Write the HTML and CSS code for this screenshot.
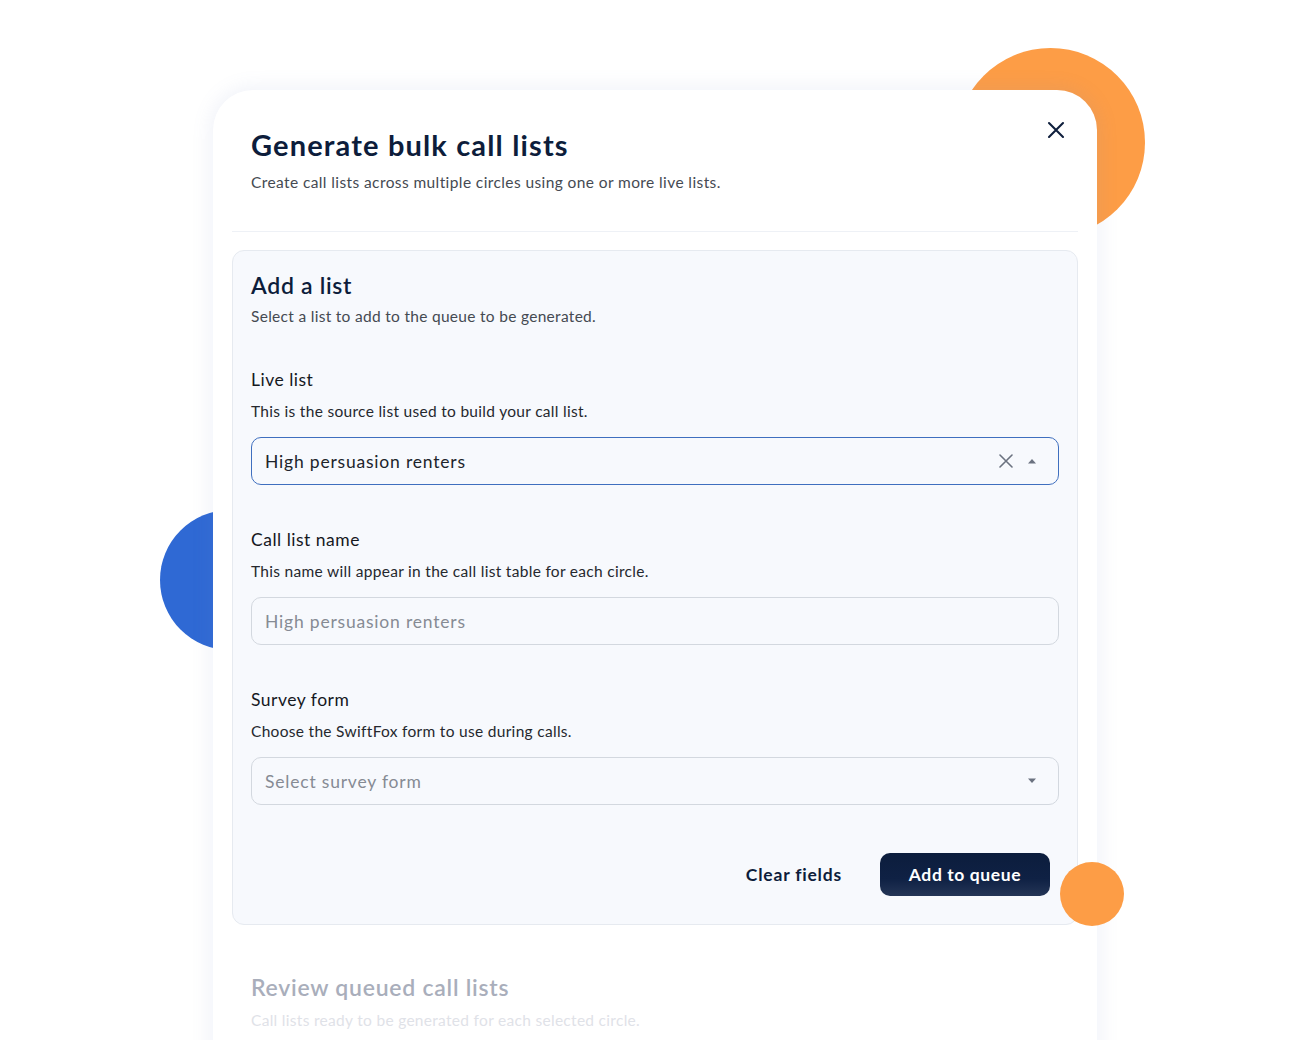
FILE: index.html
```html
<!DOCTYPE html>
<html lang="en">
<head>
<meta charset="utf-8">
<title>Generate bulk call lists</title>
<link rel="stylesheet" href="styles.css">
</head>
<body>
<div class="stage">
  <div class="deco deco-orange-big"></div>
  <div class="deco deco-blue"></div>
  <div class="deco deco-orange-small"></div>

  <section class="card">
    <header class="card-header">
      <h1 class="title">Generate bulk call lists</h1>
      <p class="subtitle">Create call lists across multiple circles using one or more live lists.</p>
      <button class="close" aria-label="Close">
        <svg width="18" height="18" viewBox="0 0 18 18"><path d="M2 2L16 16M16 2L2 16" stroke="#0f1f3d" stroke-width="2.1" stroke-linecap="round"/></svg>
      </button>
    </header>
    <div class="divider"></div>

    <div class="panel">
      <h2 class="panel-title">Add a list</h2>
      <p class="panel-sub">Select a list to add to the queue to be generated.</p>

      <div class="field">
        <div class="label">Live list</div>
        <div class="help">This is the source list used to build your call list.</div>
        <div class="input input-focus">
          <span class="value">High persuasion renters</span>
          <span class="icons">
            <svg width="14" height="14" viewBox="0 0 14 14"><path d="M1 1L13 13M13 1L1 13" stroke="#6b7280" stroke-width="1.6" stroke-linecap="round"/></svg>
            <svg width="10" height="6" viewBox="0 0 10 6"><path d="M1 5.5L5 1L9 5.5Z" fill="#6b7280"/></svg>
          </span>
        </div>
      </div>

      <div class="field">
        <div class="label">Call list name</div>
        <div class="help">This name will appear in the call list table for each circle.</div>
        <div class="input">
          <span class="placeholder">High persuasion renters</span>
        </div>
      </div>

      <div class="field">
        <div class="label">Survey form</div>
        <div class="help">Choose the SwiftFox form to use during calls.</div>
        <div class="input">
          <span class="placeholder">Select survey form</span>
          <span class="icons">
            <svg width="10" height="6" viewBox="0 0 10 6"><path d="M1 0.5L5 5L9 0.5Z" fill="#6b7280"/></svg>
          </span>
        </div>
      </div>

      <div class="actions">
        <button class="btn-text">Clear fields</button>
        <button class="btn-primary">Add to queue</button>
      </div>
    </div>

    <div class="review">
      <h2 class="review-title">Review queued call lists</h2>
      <p class="review-sub">Call lists ready to be generated for each selected circle.</p>
    </div>
  </section>
</div>
</body>
</html>
```

FILE: styles.css
```css
* { box-sizing: border-box; }
html, body { margin: 0; padding: 0; background: #ffffff; }
body {
  font-family: "Lato", "Liberation Sans", sans-serif;
  color: #0f1f3d;
  overflow: hidden;
  height: 1040px;
}
.stage {
  position: relative;
  width: 1310px;
  height: 1040px;
  padding-top: 90px;
}
.deco { position: absolute; border-radius: 50%; }
.deco-orange-big {
  left: 956px; top: 48px; width: 189px; height: 189px;
  background: #fd9d46;
  z-index: 0;
}
.deco-blue {
  left: 160px; top: 510px; width: 140px; height: 140px;
  background: #2f69d4;
  z-index: 0;
}
.deco-orange-small {
  left: 1060px; top: 862px; width: 64px; height: 64px;
  background: #fd9d46;
  z-index: 3;
}
.card {
  position: relative;
  z-index: 1;
  margin-left: 213px;
  width: 884px;
  height: 1000px;
  background: #ffffff;
  border-radius: 40px 40px 0 0;
  box-shadow: 0 0 18px 4px rgba(120, 140, 200, 0.10);
  padding: 0 19px;
}
.card-header {
  position: relative;
  padding: 38px 19px 38px 19px;
}
.title {
  margin: 0;
  font-size: 29px;
  line-height: 34px;
  font-weight: 700;
  color: #0d1d3b;
  letter-spacing: 1.15px;
}
.subtitle {
  margin: 9px 0 0 0;
  font-size: 15.5px;
  line-height: 22px;
  color: #454a52;
  letter-spacing: 0.4px;
}
.close {
  position: absolute;
  right: 9px;
  top: 27px;
  width: 26px; height: 26px;
  border: 0; background: transparent; padding: 0;
  display: flex; align-items: center; justify-content: center;
}
.divider { height: 1px; background: #eef1f6; }
.panel {
  margin-top: 18px;
  background: #f7f9fd;
  border: 1px solid #e6eaf0;
  border-radius: 12px;
  padding: 20px 18px 28px 18px;
}
.panel-title {
  margin: 0;
  font-size: 23px;
  line-height: 28px;
  font-weight: 600;
  color: #0d1d3b;
  letter-spacing: 0.7px;
}
.panel-sub {
  margin: 6px 0 0 0;
  font-size: 15.5px;
  line-height: 22px;
  color: #454a52;
  letter-spacing: 0.3px;
}
.field { margin-top: 41px; }
.field + .field { margin-top: 43px; }
.label {
  font-size: 17.5px;
  line-height: 24px;
  color: #15181e;
  letter-spacing: 0.5px;
}
.help {
  margin-top: 8px;
  font-size: 15.5px;
  line-height: 22px;
  color: #25282e;
  letter-spacing: 0.3px;
}
.input {
  margin-top: 15px;
  height: 48px;
  border: 1px solid #d3d8df;
  border-radius: 10px;
  background: #f7f9fd;
  display: flex;
  align-items: center;
  justify-content: space-between;
  padding: 0 21px 0 13px;
  font-size: 17.5px;
  letter-spacing: 0.8px;
}
.input-focus { border: 1.5px solid #3f6fbf; }
.value { color: #20242b; }
.placeholder { color: #868b94; }
.icons { display: flex; align-items: center; gap: 14px; }
.actions {
  margin-top: 48px;
  display: flex;
  justify-content: flex-end;
  align-items: center;
  gap: 38px;
  padding-right: 9px;
}
.btn-text {
  border: 0; background: transparent; padding: 0;
  font-family: inherit;
  font-size: 17.5px;
  font-weight: 700;
  color: #0d1d3b;
  letter-spacing: 0.8px;
}
.btn-primary {
  border: 0;
  height: 43px;
  width: 170px;
  border-radius: 10px;
  background: linear-gradient(180deg, #0c1d3d 0%, #0f2144 60%, #243556 100%);
  color: #ffffff;
  font-family: inherit;
  font-size: 17.5px;
  font-weight: 700;
  letter-spacing: 0.6px;
}
.review { padding: 48px 19px 0 19px; }
.review-title {
  margin: 0;
  font-size: 23px;
  line-height: 28px;
  font-weight: 600;
  color: #a9aebb;
  letter-spacing: 0.75px;
}
.review-sub {
  margin: 8px 0 0 0;
  font-size: 15.5px;
  line-height: 22px;
  color: #dfe2e8;
  letter-spacing: 0.3px;
}
```
